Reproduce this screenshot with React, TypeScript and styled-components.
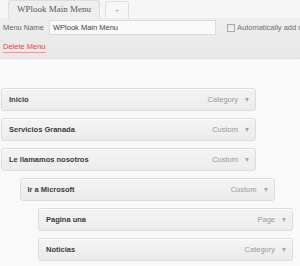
import React from "react";
import styled, { createGlobalStyle } from "styled-components";

const GlobalStyle = createGlobalStyle`
  html, body {
    margin: 0;
    padding: 0;
    background: #f9f9f9;
    font-family: "Liberation Sans", Arial, sans-serif;
  }
`;

const Page = styled.div`
  width: 300px;
  height: 266px;
  overflow: hidden;
  background: #f9f9f9;
`;

const TabBar = styled.div`
  display: flex;
  align-items: flex-end;
  gap: 5px;
  height: 18px;
  padding-left: 8px;
  background: #f6f6f6;
`;

interface TabProps {
  active?: boolean;
}

const Tab = styled.div<TabProps>`
  box-sizing: border-box;
  height: ${(p) => (p.active ? "18px" : "17px")};
  min-width: ${(p) => (p.active ? "0" : "24px")};
  padding: 0 8px;
  text-align: center;
  border: 1px solid #dedede;
  border-bottom: none;
  border-radius: 3px 3px 0 0;
  background: ${(p) => (p.active ? "#eeeeee" : "#f7f7f7")};
  color: ${(p) => (p.active ? "#555" : "#aaa")};
  font-family: "Liberation Serif", "Times New Roman", serif;
  font-size: 9px;
  line-height: ${(p) => (p.active ? "17px" : "16px")};
`;

const Header = styled.div`
  box-sizing: border-box;
  height: 41px;
  padding: 2px 0 0 3px;
  background: linear-gradient(#eeeeee, #e8e8e8);
  border-bottom: 1px solid #e0e0e0;
`;

const NameRow = styled.div`
  display: flex;
  align-items: center;
  height: 15px;
  white-space: nowrap;
`;

const Label = styled.span`
  flex-shrink: 0;
  width: 46px;
  font-size: 7.5px;
  color: #666;
`;

const NameInput = styled.div`
  box-sizing: border-box;
  flex-shrink: 0;
  width: 167px;
  height: 15px;
  padding-left: 3px;
  border: 1px solid #dcdcdc;
  background: #fafafa;
  color: #444;
  font-size: 7.5px;
  line-height: 13px;
`;

const Check = styled.span`
  box-sizing: border-box;
  flex-shrink: 0;
  width: 8px;
  height: 8px;
  margin: 0 2px 0 11px;
  border: 1px solid #aaa;
  background: linear-gradient(#e4e4e4, #f4f4f4);
`;

const AutoText = styled.span`
  font-size: 7.5px;
  color: #707070;
`;

const DeleteLink = styled.span`
  display: inline-block;
  margin-top: 7px;
  padding-bottom: 1px;
  color: #f03c4e;
  font-size: 7.5px;
  line-height: 9px;
  border-bottom: 1px solid #ff8b96;
`;

const List = styled.div`
  display: flex;
  flex-direction: column;
  gap: 7px;
  padding: 29px 0 0 1px;
`;

interface ItemProps {
  depth: number;
}

const Item = styled.div<ItemProps>`
  box-sizing: border-box;
  display: flex;
  align-items: center;
  width: 255px;
  height: 23px;
  margin-left: ${(p) => p.depth * 18.5}px;
  padding: 0 6px 0 7px;
  border: 1px solid #dcdcdc;
  border-radius: 3px;
  background: linear-gradient(#f4f4f4, #ececec);
  box-shadow: 0 1px 0 #fff inset;
`;

const Title = styled.span`
  flex: 1;
  font-size: 7.5px;
  font-weight: bold;
  color: #3a3a3a;
`;

const Kind = styled.span`
  font-size: 7.5px;
  color: #999;
`;

const Arrow = styled.span`
  width: 0;
  height: 0;
  margin-left: 7px;
  border-left: 2.5px solid transparent;
  border-right: 2.5px solid transparent;
  border-top: 4px solid #a8a8a8;
`;

const items = [
  { title: "Inicio", kind: "Category", depth: 0 },
  { title: "Servicios Granada", kind: "Custom", depth: 0 },
  { title: "Le llamamos nosotros", kind: "Custom", depth: 0 },
  { title: "Ir a Microsoft", kind: "Custom", depth: 1 },
  { title: "Pagina una", kind: "Page", depth: 2 },
  { title: "Noticias", kind: "Category", depth: 2 },
];

const App: React.FC = () => {
  return (
    <Page>
      <GlobalStyle />
      <TabBar>
        <Tab active>WPlook Main Menu</Tab>
        <Tab>+</Tab>
      </TabBar>
      <Header>
        <NameRow>
          <Label>Menu Name</Label>
          <NameInput>WPlook Main Menu</NameInput>
          <Check />
          <AutoText>Automatically add new top-level pages</AutoText>
        </NameRow>
        <DeleteLink>Delete Menu</DeleteLink>
      </Header>
      <List>
        {items.map((item) => (
          <Item key={item.title} depth={item.depth}>
            <Title>{item.title}</Title>
            <Kind>{item.kind}</Kind>
            <Arrow />
          </Item>
        ))}
      </List>
    </Page>
  );
};

export default App;
